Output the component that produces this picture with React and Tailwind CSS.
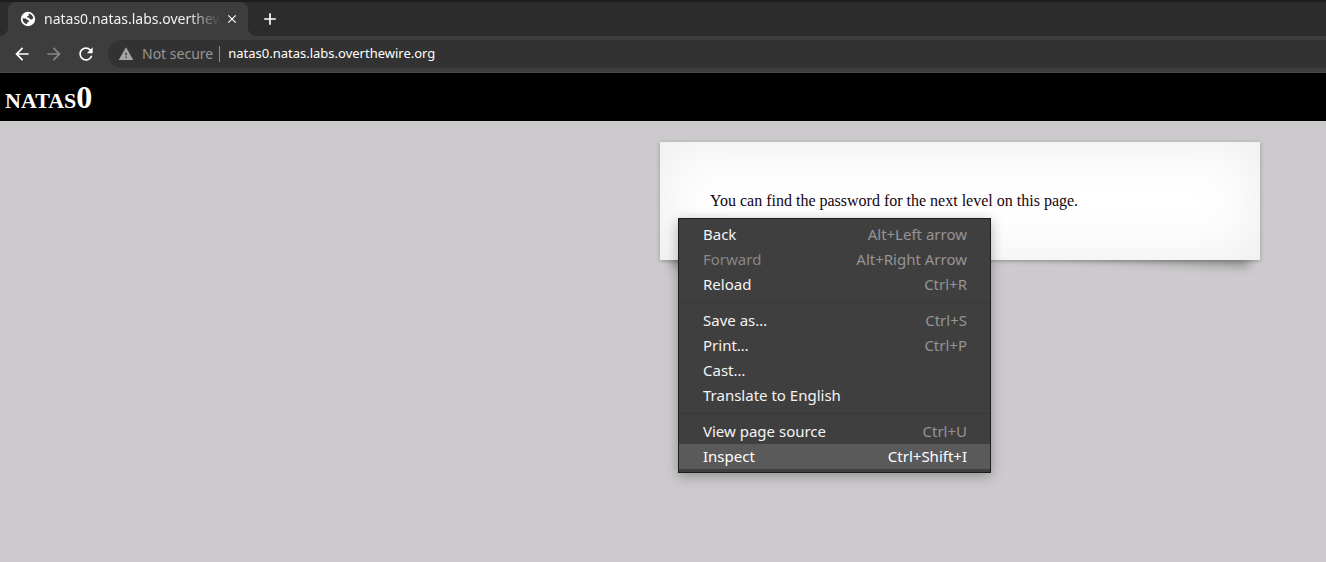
import { MdAdd, MdArrowBack, MdArrowForward, MdClose, MdRefresh, MdWarning } from "react-icons/md";

const menuGroups = [
  [
    { label: "Back", keys: "Alt+Left arrow" },
    { label: "Forward", keys: "Alt+Right Arrow", disabled: true },
    { label: "Reload", keys: "Ctrl+R" },
  ],
  [
    { label: "Save as…", keys: "Ctrl+S" },
    { label: "Print…", keys: "Ctrl+P" },
    { label: "Cast…" },
    { label: "Translate to English" },
  ],
  [
    { label: "View page source", keys: "Ctrl+U" },
    { label: "Inspect", keys: "Ctrl+Shift+I", active: true },
  ],
];

function GlobeIcon() {
  return (
    <svg viewBox="0 0 16 16" className="size-4 shrink-0" aria-hidden="true">
      <circle cx="8" cy="8" r="7.2" fill="#ffffff" />
      <path
        d="M8.6 2.6 C10.8 2.9 12.8 4.6 13.3 7 L11.8 8.6 L9.9 8.2 L9.3 6.8 L7.2 6.4 L7.4 5 L9 4.4 Z"
        fill="#3d3d3d"
      />
      <path
        d="M2.6 7.2 L5.6 7.6 L7.6 9 L9 9.6 L8.6 11 L7.2 11.6 L6.8 13.2 C4.4 12.6 2.5 10.4 2.6 7.2 Z"
        fill="#3d3d3d"
      />
    </svg>
  );
}

function TabStrip() {
  return (
    <div className="flex h-9 items-stretch border-t-2 border-[#1c1c1c] bg-[#2c2c2c]">
      <div className="flex w-2 bg-[#3d3d3d]">
        <div className="flex-1 rounded-br-lg bg-[#2c2c2c]" />
      </div>
      <div className="flex w-60 items-center rounded-t-lg bg-[#3d3d3d] pr-2 pl-3 text-white">
        <GlobeIcon />
        <span className="ml-2 flex-1 overflow-hidden whitespace-nowrap text-sm text-[#f1f1f1] [mask-image:linear-gradient(to_right,black_82%,transparent)]">
          natas0.natas.labs.overthewire.org
        </span>
        <button type="button" aria-label="Close tab" className="ml-1 shrink-0 p-px">
          <MdClose className="size-3.5" />
        </button>
      </div>
      <div className="flex flex-1 bg-[#3d3d3d]">
        <div className="flex flex-1 items-center rounded-bl-lg bg-[#2c2c2c] pl-3 text-white">
          <button type="button" aria-label="New tab">
            <MdAdd className="size-5" />
          </button>
        </div>
      </div>
    </div>
  );
}

function Toolbar() {
  return (
    <div className="flex items-center border-b border-[#484848] bg-[#3d3d3d] pt-1 pb-1 pl-3 text-white">
      <button type="button" aria-label="Back">
        <MdArrowBack className="size-5" />
      </button>
      <button type="button" aria-label="Forward" disabled className="ml-3 text-[#878787]">
        <MdArrowForward className="size-5" />
      </button>
      <button type="button" aria-label="Reload" className="ml-3">
        <MdRefresh className="size-5" />
      </button>
      <div className="ml-3 flex h-7 flex-1 items-center rounded-l-full bg-[#323232] pl-2.5 text-[13px]">
        <MdWarning className="size-4 shrink-0 text-[#a5a5a5]" />
        <label htmlFor="address" className="ml-2 whitespace-nowrap text-sm text-[#969696]">
          Not secure
        </label>
        <span className="ml-1.5 h-4 w-px bg-[#8a8a8a]" />
        <input
          id="address"
          type="text"
          defaultValue="natas0.natas.labs.overthewire.org"
          className="ml-2 min-w-0 flex-1 bg-transparent text-white outline-none"
        />
      </div>
    </div>
  );
}

function MenuItem({ label, keys, disabled, active }) {
  return (
    <button
      type="button"
      role="menuitem"
      disabled={disabled}
      className={`flex h-[25px] w-full items-center justify-between pr-[23px] pl-6 text-[15px] ${
        active ? "bg-[#5b5a5b] text-white" : disabled ? "text-[#878687]" : "text-[#f4f4f4]"
      }`}
    >
      <span>{label}</span>
      {keys && <span className={active ? "text-white" : "text-[#959495]"}>{keys}</span>}
    </button>
  );
}

function ContextMenu() {
  return (
    <div
      role="menu"
      aria-label="Page"
      className="absolute top-[76px] left-[18px] z-10 w-[313px] border border-[#1d1d1d] bg-[#403f40] py-[3px] font-['Noto_Sans',sans-serif] shadow-[0_3px_12px_rgba(0,0,0,0.3)]"
    >
      {menuGroups.map((items, index) => (
        <div key={items[0].label} role="group">
          {index > 0 && (
            <div role="separator" className="py-[5px]">
              <div className="h-px bg-[#393839]" />
            </div>
          )}
          {items.map((item) => (
            <MenuItem key={item.label} {...item} />
          ))}
        </div>
      ))}
    </div>
  );
}

export default function App() {
  return (
    <div className="flex min-h-screen flex-col bg-[#cccacc]">
      <div className="font-['Noto_Sans',sans-serif]">
        <TabStrip />
        <Toolbar />
      </div>
      <header className="bg-black px-[5px] py-1.5">
        <h1 className="font-['Liberation_Serif',serif] text-[32px] leading-9 font-bold text-white [font-variant:small-caps]">
          natas0
        </h1>
      </header>
      <main className="isolate flex flex-1 items-start justify-end pt-[21px] pr-[66px] font-['Liberation_Serif',serif]">
        <div className="relative w-[600px]">
          <div className="absolute bottom-[15px] left-2.5 -z-10 h-5 w-1/2 -rotate-3 shadow-[0_15px_10px_rgba(0,0,0,0.25)]" />
          <div className="absolute right-2.5 bottom-[15px] -z-10 h-5 w-1/2 rotate-3 shadow-[0_15px_10px_rgba(0,0,0,0.25)]" />
          <div className="bg-white shadow-[0_1px_4px_rgba(0,0,0,0.27),inset_0_0_60px_rgba(20,0,20,0.08)]">
            <p className="p-[50px] text-base leading-[18px] text-[#140510]">
              You can find the password for the next level on this page.
            </p>
          </div>
          <ContextMenu />
        </div>
      </main>
    </div>
  );
}
